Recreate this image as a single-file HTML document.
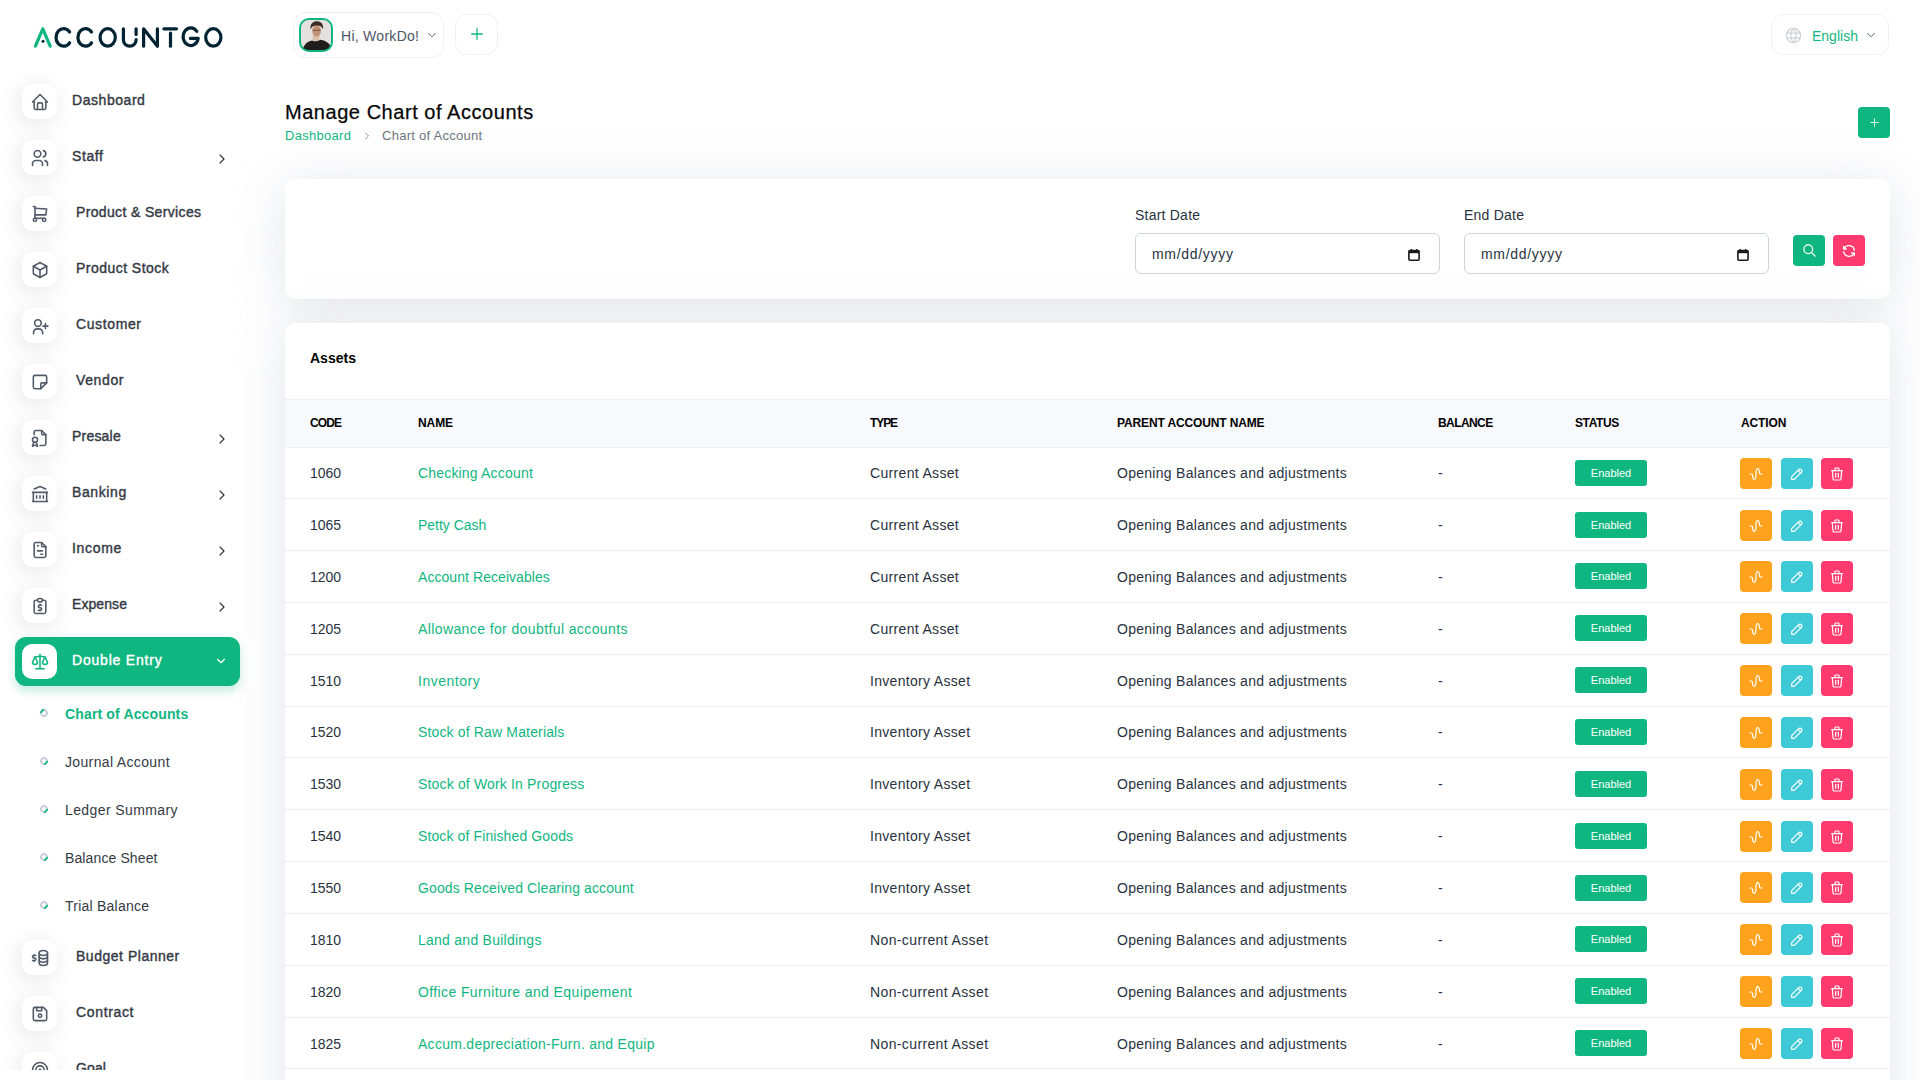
<!DOCTYPE html><html><head><meta charset="utf-8"><title>Manage Chart of Accounts</title><style>
*{box-sizing:border-box;margin:0;padding:0}
html,body{width:1920px;height:1080px;overflow:hidden;background:#fff;font-family:"Liberation Sans",sans-serif;color:#293240}
.abs{position:absolute}
.card{position:absolute;background:#fff;border-radius:10px;box-shadow:0 6px 50px rgba(182,186,203,0.38)}
.micon{position:absolute;left:22px;width:35px;height:35px;border-radius:10px;background:#fff;box-shadow:-3px 4px 23px rgba(0,0,0,0.1);display:flex;align-items:center;justify-content:center}
.mtext{position:absolute;font-size:14px;font-weight:normal;-webkit-text-stroke:0.4px currentColor;color:#343a45;white-space:nowrap;line-height:16px}
.chev{position:absolute;left:215px}
.sub{position:absolute;left:65px;font-size:14px;color:#343a45;white-space:nowrap;line-height:16px}
.dot{position:absolute;left:40px;width:8px;height:8px;border-radius:50%;border:2px solid #c9cfd8;border-bottom-color:#10b67f;transform:rotate(-45deg)}
.th{position:absolute;top:416px;letter-spacing:-0.4px;font-size:12px;font-weight:bold;color:#000;line-height:14px;white-space:nowrap}
.td{position:absolute;font-size:14px;line-height:16px;white-space:nowrap;color:#293240}
.name{color:#10b67f}
.badge{position:absolute;left:1575px;width:72px;height:26px;border-radius:3px;background:#10b67f;color:#fff;font-size:11px;display:flex;align-items:center;justify-content:center}
.act{position:absolute;width:32px;height:31px;border-radius:4px;display:flex;align-items:center;justify-content:center}
.rowline{position:absolute;left:285px;width:1605px;height:1px;background:#efeff1}
</style></head><body>
<div class="card" style="left:285px;top:179px;width:1605px;height:120px"></div>
<div class="card" style="left:285px;top:323px;width:1605px;height:900px"></div>
<svg class="abs" style="left:0;top:0" width="240" height="70" viewBox="0 0 240 70" fill="none" stroke-width="3.2" stroke-linecap="round" stroke-linejoin="round">
<path d="M35.4 46.2 L42.8 28.8 L50.2 46.2" stroke="#10b67f"/>
<circle cx="43" cy="41.2" r="1.5" fill="#002333" stroke="none"/>
<path d="M69.6 32 A7.6 8.8 0 1 0 69.6 42.8" stroke="#002333"/>
<path d="M91.5 32 A7.6 8.8 0 1 0 91.5 42.8" stroke="#002333"/>
<ellipse cx="107.7" cy="37.4" rx="7.6" ry="8.8" stroke="#002333"/>
<path d="M123.4 28.8 V40 A6.35 6.2 0 0 0 136.1 40 V39.5" stroke="#002333"/>
<path d="M136.1 28.8 V34.5" stroke="#002333"/>
<path d="M143.6 46.2 V28.8 L157.4 46.2 V28.8" stroke="#002333"/>
<path d="M163.9 28.8 H176.5" stroke="#002333"/>
<path d="M170.5 33 V46.2" stroke="#002333"/>
<path d="M196.8 31.4 A7.6 8.8 0 1 0 198.2 38.4 H190.4" stroke="#002333"/>
<ellipse cx="213.3" cy="37.4" rx="7.6" ry="8.8" stroke="#002333"/>
</svg>
<div class="abs" style="left:0;top:60px;width:260px;height:1010px;overflow:hidden">
<div class="micon" style="top:24px"><svg width="20" height="20" viewBox="0 0 24 24" fill="none" stroke="#525b69" stroke-width="1.9" stroke-linecap="round" stroke-linejoin="round" ><path d="M5 12l-2 0l9 -9l9 9l-2 0"/><path d="M5 12v7a2 2 0 0 0 2 2h10a2 2 0 0 0 2 -2v-7"/><path d="M9 21v-6a2 2 0 0 1 2 -2h2a2 2 0 0 1 2 2v6"/></svg></div>
<div class="mtext" style="left:72px;top:32px;letter-spacing:0.55px">Dashboard</div>
<div class="micon" style="top:80px"><svg width="20" height="20" viewBox="0 0 24 24" fill="none" stroke="#525b69" stroke-width="1.9" stroke-linecap="round" stroke-linejoin="round" ><path d="M5 7a4 4 0 1 0 8 0a4 4 0 1 0 -8 0"/><path d="M3 21v-2a4 4 0 0 1 4 -4h4a4 4 0 0 1 4 4v2"/><path d="M16 3.13a4 4 0 0 1 0 7.75"/><path d="M21 21v-2a4 4 0 0 0 -3 -3.85"/></svg></div>
<div class="mtext" style="left:72px;top:88px;letter-spacing:0.6px">Staff</div>
<div class="chev" style="left:214px;top:91px"><svg width="16" height="16" viewBox="0 0 24 24" fill="none" stroke="#343a45" stroke-width="1.8" stroke-linecap="round" stroke-linejoin="round" ><path d="M9 6l6 6l-6 6"/></svg></div>
<div class="micon" style="top:136px"><svg width="20" height="20" viewBox="0 0 24 24" fill="none" stroke="#525b69" stroke-width="1.9" stroke-linecap="round" stroke-linejoin="round" ><path d="M4 19a2 2 0 1 0 4 0a2 2 0 1 0 -4 0"/><path d="M15 19a2 2 0 1 0 4 0a2 2 0 1 0 -4 0"/><path d="M17 17h-11v-14h-2"/><path d="M6 5l14 1l-1 7h-13"/></svg></div>
<div class="mtext" style="left:76px;top:144px;letter-spacing:0.353px">Product &amp; Services</div>
<div class="micon" style="top:192px"><svg width="20" height="20" viewBox="0 0 24 24" fill="none" stroke="#525b69" stroke-width="1.9" stroke-linecap="round" stroke-linejoin="round" ><path d="M12 3l8 4.5l0 9l-8 4.5l-8 -4.5l0 -9l8 -4.5"/><path d="M12 12l8 -4.5"/><path d="M12 12l0 9"/><path d="M12 12l-8 -4.5"/></svg></div>
<div class="mtext" style="left:76px;top:200px;letter-spacing:0.462px">Product Stock</div>
<div class="micon" style="top:248px"><svg width="20" height="20" viewBox="0 0 24 24" fill="none" stroke="#525b69" stroke-width="1.9" stroke-linecap="round" stroke-linejoin="round" ><path d="M5.5 8.4a4 4 0 1 0 8 0a4 4 0 1 0 -8 0"/><path d="M4.2 21.4v-1.5a4.5 4.5 0 0 1 4.5 -4.5h2a4.5 4.5 0 0 1 4.5 4.5v1.5"/><path d="M15.5 12.1h6m-3 -3v6"/></svg></div>
<div class="mtext" style="left:76px;top:256px;letter-spacing:0.614px">Customer</div>
<div class="micon" style="top:304px"><svg width="20" height="20" viewBox="0 0 24 24" fill="none" stroke="#525b69" stroke-width="1.9" stroke-linecap="round" stroke-linejoin="round" ><path d="M13 20l7 -7"/><path d="M13 20v-6a1 1 0 0 1 1 -1h6v-7a2 2 0 0 0 -2 -2h-12a2 2 0 0 0 -2 2v12a2 2 0 0 0 2 2h7"/></svg></div>
<div class="mtext" style="left:76px;top:312px;letter-spacing:0.62px">Vendor</div>
<div class="micon" style="top:360px"><svg width="20" height="20" viewBox="0 0 24 24" fill="none" stroke="#525b69" stroke-width="1.9" stroke-linecap="round" stroke-linejoin="round" ><path d="M14 3v4a1 1 0 0 0 1 1h4"/><path d="M5 8v-3a2 2 0 0 1 2 -2h7l5 5v11a2 2 0 0 1 -2 2h-5"/><path d="M3 14a3 3 0 1 0 6 0a3 3 0 1 0 -6 0"/><path d="M4.5 17l-1.5 5l3 -1.5l3 1.5l-1.5 -5"/></svg></div>
<div class="mtext" style="left:72px;top:368px;letter-spacing:0.208px">Presale</div>
<div class="chev" style="left:214px;top:371px"><svg width="16" height="16" viewBox="0 0 24 24" fill="none" stroke="#343a45" stroke-width="1.8" stroke-linecap="round" stroke-linejoin="round" ><path d="M9 6l6 6l-6 6"/></svg></div>
<div class="micon" style="top:416px"><svg width="20" height="20" viewBox="0 0 24 24" fill="none" stroke="#525b69" stroke-width="1.9" stroke-linecap="round" stroke-linejoin="round" ><path d="M3 21l18 0"/><path d="M3 10l18 0"/><path d="M5 6l7 -3l7 3"/><path d="M4 10l0 11"/><path d="M20 10l0 11"/><path d="M8 14l0 3"/><path d="M12 14l0 3"/><path d="M16 14l0 3"/></svg></div>
<div class="mtext" style="left:72px;top:424px;letter-spacing:0.608px">Banking</div>
<div class="chev" style="left:214px;top:427px"><svg width="16" height="16" viewBox="0 0 24 24" fill="none" stroke="#343a45" stroke-width="1.8" stroke-linecap="round" stroke-linejoin="round" ><path d="M9 6l6 6l-6 6"/></svg></div>
<div class="micon" style="top:472px"><svg width="20" height="20" viewBox="0 0 24 24" fill="none" stroke="#525b69" stroke-width="1.9" stroke-linecap="round" stroke-linejoin="round" ><path d="M14 3v4a1 1 0 0 0 1 1h4"/><path d="M17 21h-10a2 2 0 0 1 -2 -2v-14a2 2 0 0 1 2 -2h7l5 5v11a2 2 0 0 1 -2 2z"/><path d="M9 7l1 0"/><path d="M9 13l6 0"/><path d="M13 17l2 0"/></svg></div>
<div class="mtext" style="left:72px;top:480px;letter-spacing:0.67px">Income</div>
<div class="chev" style="left:214px;top:483px"><svg width="16" height="16" viewBox="0 0 24 24" fill="none" stroke="#343a45" stroke-width="1.8" stroke-linecap="round" stroke-linejoin="round" ><path d="M9 6l6 6l-6 6"/></svg></div>
<div class="micon" style="top:528px"><svg width="20" height="20" viewBox="0 0 24 24" fill="none" stroke="#525b69" stroke-width="1.9" stroke-linecap="round" stroke-linejoin="round" ><path d="M9 5h-2a2 2 0 0 0 -2 2v12a2 2 0 0 0 2 2h10a2 2 0 0 0 2 -2v-12a2 2 0 0 0 -2 -2h-2"/><path d="M9 5a2 2 0 0 1 2 -2h2a2 2 0 0 1 2 2a2 2 0 0 1 -2 2h-2a2 2 0 0 1 -2 -2z"/><path d="M14 11h-2.5a1.5 1.5 0 0 0 0 3h1a1.5 1.5 0 0 1 0 3h-2.5"/><path d="M12 17v1m0 -8v1"/></svg></div>
<div class="mtext" style="left:72px;top:536px;letter-spacing:0.083px">Expense</div>
<div class="chev" style="left:214px;top:539px"><svg width="16" height="16" viewBox="0 0 24 24" fill="none" stroke="#343a45" stroke-width="1.8" stroke-linecap="round" stroke-linejoin="round" ><path d="M9 6l6 6l-6 6"/></svg></div>
<div class="abs" style="left:15px;top:577px;width:225px;height:49px;border-radius:11px;background:#10b67f;box-shadow:0 5px 10px rgba(16,182,127,0.25)"></div>
<div class="micon" style="top:584px;box-shadow:none"><svg width="20" height="20" viewBox="0 0 24 24" fill="none" stroke="#10b67f" stroke-width="1.9" stroke-linecap="round" stroke-linejoin="round" ><path d="M7 20l10 0"/><path d="M6 6l6 -1l6 1"/><path d="M12 3l0 17"/><path d="M9 12l-3 -6l-3 6a3 3 0 0 0 6 0"/><path d="M21 12l-3 -6l-3 6a3 3 0 0 0 6 0"/></svg></div>
<div class="mtext" style="left:72px;top:592px;color:#fff;letter-spacing:0.791px">Double Entry</div>
<div class="chev" style="left:214px;top:594px"><svg width="14" height="14" viewBox="0 0 24 24" fill="none" stroke="#fff" stroke-width="2" stroke-linecap="round" stroke-linejoin="round" ><path d="M6 9l6 6l6 -6"/></svg></div>
<div class="dot" style="top:649px;border-bottom-color:#c9cfd8;border-top-color:#10b67f"></div>
<div class="sub" style="top:646px;color:#10b67f;font-weight:bold;letter-spacing:0.15px">Chart of Accounts</div>
<div class="dot" style="top:697px;"></div>
<div class="sub" style="top:694px;;letter-spacing:0.35px">Journal Account</div>
<div class="dot" style="top:745px;"></div>
<div class="sub" style="top:742px;;letter-spacing:0.392px">Ledger Summary</div>
<div class="dot" style="top:793px;"></div>
<div class="sub" style="top:790px;;letter-spacing:0.117px">Balance Sheet</div>
<div class="dot" style="top:841px;"></div>
<div class="sub" style="top:838px;;letter-spacing:0.233px">Trial Balance</div>
<div class="micon" style="top:880px"><svg width="20" height="20" viewBox="0 0 24 24" fill="none" stroke="#525b69" stroke-width="1.9" stroke-linecap="round" stroke-linejoin="round" ><path d="M11 6a5 3 0 1 0 10 0a5 3 0 1 0 -10 0"/><path d="M11 6v4c0 1.657 2.239 3 5 3s5 -1.343 5 -3v-4"/><path d="M11 10v4c0 1.657 2.239 3 5 3s5 -1.343 5 -3v-4"/><path d="M11 14v4c0 1.657 2.239 3 5 3s5 -1.343 5 -3v-4"/><path d="M7 9h-2.5a1.5 1.5 0 0 0 0 3h1a1.5 1.5 0 0 1 0 3h-2.5"/><path d="M5 15v1m0 -8v1"/></svg></div>
<div class="mtext" style="left:76px;top:888px;letter-spacing:0.519px">Budget Planner</div>
<div class="micon" style="top:936px"><svg width="20" height="20" viewBox="0 0 24 24" fill="none" stroke="#525b69" stroke-width="1.9" stroke-linecap="round" stroke-linejoin="round" ><path d="M6 4h10l4 4v10a2 2 0 0 1 -2 2h-12a2 2 0 0 1 -2 -2v-12a2 2 0 0 1 2 -2"/><path d="M10 14a2 2 0 1 0 4 0a2 2 0 1 0 -4 0"/><path d="M14 4l0 4l-6 0l0 -4"/></svg></div>
<div class="mtext" style="left:76px;top:944px;letter-spacing:0.657px">Contract</div>
<div class="micon" style="top:992px"><svg width="20" height="20" viewBox="0 0 24 24" fill="none" stroke="#525b69" stroke-width="1.9" stroke-linecap="round" stroke-linejoin="round" ><path d="M11 12a1 1 0 1 0 2 0a1 1 0 1 0 -2 0"/><path d="M7 12a5 5 0 1 0 10 0a5 5 0 1 0 -10 0"/><path d="M3 12a9 9 0 1 0 18 0a9 9 0 1 0 -18 0"/></svg></div>
<div class="mtext" style="left:76px;top:1000px;letter-spacing:0.133px">Goal</div>
</div>
<div class="abs" style="left:293px;top:12px;width:151px;height:46px;border:1px solid #f1f1f3;border-radius:12px;background:#fff"></div>
<svg class="abs" style="left:299px;top:18px" width="34" height="34" viewBox="0 0 34 34">
<defs><clipPath id="av"><rect x="1.5" y="1.5" width="31" height="31" rx="8"/></clipPath></defs>
<rect x="1" y="1" width="32" height="32" rx="9" fill="#e5e1df"/>
<g clip-path="url(#av)">
<path d="M13.5 17 L20.5 17 L20.5 23 L13.5 23 Z" fill="#dcc3b0"/>
<path d="M3.5 34 C4 27 8 23.5 13 22.5 Q17 24.5 21.5 21.8 C27 22.5 31.5 26 33 31 L33 34 Z" fill="#1f1e1d"/>
<ellipse cx="17.6" cy="12.8" rx="4.4" ry="5.9" fill="#c39277"/>
<path d="M11.6 11.5 C10.8 5.5 14.5 3.2 18 3.3 C22 3.5 24.8 6 24 11.5 C23.2 8.6 21.5 7.4 17.8 7.4 C14.2 7.4 12.6 8.8 11.6 11.5 Z" fill="#3b2e26"/>
<path d="M13.8 12.2 H21.4" stroke="#5a4032" stroke-width="0.8"/>
</g>
<rect x="1" y="1" width="32" height="32" rx="9" fill="none" stroke="#10b67f" stroke-width="2"/>
</svg>
<div class="abs" style="left:341px;top:28px;font-size:14px;line-height:16px;color:#4d5665;letter-spacing:0.28px">Hi, WorkDo!</div>
<div class="abs" style="left:425px;top:28px"><svg width="14" height="14" viewBox="0 0 24 24" fill="none" stroke="#525b69" stroke-width="1.6" stroke-linecap="round" stroke-linejoin="round" ><path d="M6 9l6 6l6 -6"/></svg></div>
<div class="abs" style="left:455px;top:14px;width:43px;height:41px;border:1px solid #f1f1f3;border-radius:12px;background:#fff;display:flex;align-items:center;justify-content:center"><span style="display:block;margin-top:2px"><svg width="18" height="18" viewBox="0 0 24 24" fill="none" stroke="#10b67f" stroke-width="1.7" stroke-linecap="round" stroke-linejoin="round" ><path d="M12 5l0 14"/><path d="M5 12l14 0"/></svg></span></div>
<div class="abs" style="left:1771px;top:14px;width:118px;height:41px;border:1px solid #f1f1f3;border-radius:12px;background:#fff"></div>
<div class="abs" style="left:1784px;top:26px"><svg width="19" height="19" viewBox="0 0 24 24" fill="none" stroke="#cfd2d7" stroke-width="1.6" stroke-linecap="round" stroke-linejoin="round" ><path d="M3 12a9 9 0 1 0 18 0a9 9 0 0 0 -18 0"/><path d="M3.6 9h16.8"/><path d="M3.6 15h16.8"/><path d="M11.5 3a17 17 0 0 0 0 18"/><path d="M12.5 3a17 17 0 0 1 0 18"/></svg></div>
<div class="abs" style="left:1812px;top:28px;font-size:14px;line-height:16px;color:#10b67f">English</div>
<div class="abs" style="left:1864px;top:28px"><svg width="14" height="14" viewBox="0 0 24 24" fill="none" stroke="#525b69" stroke-width="1.6" stroke-linecap="round" stroke-linejoin="round" ><path d="M6 9l6 6l6 -6"/></svg></div>
<div class="abs" style="left:285px;top:101px;font-size:20px;-webkit-text-stroke:0.25px #060606;line-height:23px;color:#060606;letter-spacing:0.543px">Manage Chart of Accounts</div>
<div class="abs" style="left:285px;top:128px;font-size:13px;line-height:15px;color:#10b67f;letter-spacing:0.287px">Dashboard</div>
<div class="abs" style="left:361px;top:128px"><svg width="12" height="12" viewBox="0 0 24 24" fill="none" stroke="#6c757d" stroke-width="1.6" stroke-linecap="round" stroke-linejoin="round" ><path d="M9 6l6 6l-6 6"/></svg></div>
<div class="abs" style="left:382px;top:128px;font-size:13px;line-height:15px;color:#6c757d;letter-spacing:0.273px">Chart of Account</div>
<div class="abs" style="left:1858px;top:107px;width:32px;height:31px;border-radius:4px;background:#10b67f;display:flex;align-items:center;justify-content:center"><svg width="13" height="13" viewBox="0 0 24 24" fill="none" stroke="#fff" stroke-width="1.6" stroke-linecap="round" stroke-linejoin="round" ><path d="M12 5l0 14"/><path d="M5 12l14 0"/></svg></div>
<div class="abs" style="left:1135px;top:207px;font-size:14px;line-height:16px;color:#293240;letter-spacing:0.222px">Start Date</div>
<div class="abs" style="left:1135px;top:233px;width:305px;height:41px;border:1px solid #ced4da;border-radius:6px;background:#fff"></div>
<div class="abs" style="left:1152px;top:246px;font-size:14px;line-height:16px;color:#293240;letter-spacing:0.689px">mm/dd/yyyy</div>
<div class="abs" style="left:1408px;top:247px"><svg width="12" height="12" viewBox="0 0 12 12"><rect x="0.9" y="1.6" width="10.2" height="9.6" rx="1" fill="none" stroke="#1a1a1a" stroke-width="1.6"/><rect x="0.9" y="1.6" width="10.2" height="2.6" fill="#1a1a1a"/><rect x="2.6" y="0" width="1.4" height="2.4" fill="#1a1a1a"/><rect x="8" y="0" width="1.4" height="2.4" fill="#1a1a1a"/></svg></div>
<div class="abs" style="left:1464px;top:207px;font-size:14px;line-height:16px;color:#293240;letter-spacing:0.222px">End Date</div>
<div class="abs" style="left:1464px;top:233px;width:305px;height:41px;border:1px solid #ced4da;border-radius:6px;background:#fff"></div>
<div class="abs" style="left:1481px;top:246px;font-size:14px;line-height:16px;color:#293240;letter-spacing:0.689px">mm/dd/yyyy</div>
<div class="abs" style="left:1737px;top:247px"><svg width="12" height="12" viewBox="0 0 12 12"><rect x="0.9" y="1.6" width="10.2" height="9.6" rx="1" fill="none" stroke="#1a1a1a" stroke-width="1.6"/><rect x="0.9" y="1.6" width="10.2" height="2.6" fill="#1a1a1a"/><rect x="2.6" y="0" width="1.4" height="2.4" fill="#1a1a1a"/><rect x="8" y="0" width="1.4" height="2.4" fill="#1a1a1a"/></svg></div>
<div class="act" style="left:1793px;top:235px;background:#10b67f"><svg width="15" height="15" viewBox="0 0 24 24" fill="none" stroke="#fff" stroke-width="2" stroke-linecap="round" stroke-linejoin="round" ><path d="M3 10a7 7 0 1 0 14 0a7 7 0 1 0 -14 0"/><path d="M21 21l-6 -6"/></svg></div>
<div class="act" style="left:1833px;top:235px;background:#ff3a6e"><svg width="16" height="16" viewBox="0 0 24 24" fill="none" stroke="#fff" stroke-width="1.9" stroke-linecap="round" stroke-linejoin="round" ><path d="M20 11a8.1 8.1 0 0 0 -15.5 -2m-.5 -4v4h4"/><path d="M4 13a8.1 8.1 0 0 0 15.5 2m.5 4v-4h-4"/></svg></div>
<div class="abs" style="left:310px;top:350px;font-size:14px;line-height:16px;font-weight:bold;color:#000">Assets</div>
<div class="abs" style="left:285px;top:399px;width:1605px;height:49px;background:#f8f9fc;border-top:1px solid #efeff1;border-bottom:1px solid #efeff1"></div>
<div class="th" style="left:310px;letter-spacing:-0.91px">CODE</div>
<div class="th" style="left:418px;letter-spacing:-0.071px">NAME</div>
<div class="th" style="left:870px;letter-spacing:-1.09px">TYPE</div>
<div class="th" style="left:1117px;letter-spacing:-0.133px">PARENT ACCOUNT NAME</div>
<div class="th" style="left:1438px;letter-spacing:-0.588px">BALANCE</div>
<div class="th" style="left:1575px;letter-spacing:-0.4px">STATUS</div>
<div class="th" style="left:1741px;letter-spacing:-0.106px">ACTION</div>
<div class="rowline" style="top:498px"></div>
<div class="td" style="left:310px;top:465px">1060</div>
<div class="td name" style="left:418px;top:465px;letter-spacing:0.18px">Checking Account</div>
<div class="td" style="left:870px;top:465px;letter-spacing:0.329px">Current Asset</div>
<div class="td" style="left:1117px;top:465px;letter-spacing:0.281px">Opening Balances and adjustments</div>
<div class="td" style="left:1438px;top:465px">-</div>
<div class="badge" style="top:460px">Enabled</div>
<div class="act" style="left:1740px;top:458px;background:#ffa21d"><svg width="16" height="16" viewBox="0 0 24 24" fill="none" stroke="#fff" stroke-width="1.8" stroke-linecap="round" stroke-linejoin="round" ><path d="M21 12h-2c-.894 0 -1.662 -.857 -1.761 -2c-.296 -3.45 -.749 -6 -2.749 -6s-2.5 3.582 -2.5 8s-.5 8 -2.5 8s-2.452 -2.547 -2.749 -6c-.1 -1.147 -.867 -2 -1.763 -2h-2"/></svg></div>
<div class="act" style="left:1781px;top:458px;background:#3ec9d6"><svg width="16" height="16" viewBox="0 0 24 24" fill="none" stroke="#fff" stroke-width="1.8" stroke-linecap="round" stroke-linejoin="round" ><path d="M4 20h4l10.5 -10.5a2.828 2.828 0 1 0 -4 -4l-10.5 10.5v4"/><path d="M13.5 6.5l4 4"/></svg></div>
<div class="act" style="left:1821px;top:458px;background:#ff3a6e"><svg width="16" height="16" viewBox="0 0 24 24" fill="none" stroke="#fff" stroke-width="1.8" stroke-linecap="round" stroke-linejoin="round" ><path d="M4 7l16 0"/><path d="M10 11l0 6"/><path d="M14 11l0 6"/><path d="M5 7l1 12a2 2 0 0 0 2 2h8a2 2 0 0 0 2 -2l1 -12"/><path d="M9 7v-3a1 1 0 0 1 1 -1h4a1 1 0 0 1 1 1v3"/></svg></div>
<div class="rowline" style="top:550px"></div>
<div class="td" style="left:310px;top:517px">1065</div>
<div class="td name" style="left:418px;top:517px;letter-spacing:-0.022px">Petty Cash</div>
<div class="td" style="left:870px;top:517px;letter-spacing:0.329px">Current Asset</div>
<div class="td" style="left:1117px;top:517px;letter-spacing:0.281px">Opening Balances and adjustments</div>
<div class="td" style="left:1438px;top:517px">-</div>
<div class="badge" style="top:512px">Enabled</div>
<div class="act" style="left:1740px;top:510px;background:#ffa21d"><svg width="16" height="16" viewBox="0 0 24 24" fill="none" stroke="#fff" stroke-width="1.8" stroke-linecap="round" stroke-linejoin="round" ><path d="M21 12h-2c-.894 0 -1.662 -.857 -1.761 -2c-.296 -3.45 -.749 -6 -2.749 -6s-2.5 3.582 -2.5 8s-.5 8 -2.5 8s-2.452 -2.547 -2.749 -6c-.1 -1.147 -.867 -2 -1.763 -2h-2"/></svg></div>
<div class="act" style="left:1781px;top:510px;background:#3ec9d6"><svg width="16" height="16" viewBox="0 0 24 24" fill="none" stroke="#fff" stroke-width="1.8" stroke-linecap="round" stroke-linejoin="round" ><path d="M4 20h4l10.5 -10.5a2.828 2.828 0 1 0 -4 -4l-10.5 10.5v4"/><path d="M13.5 6.5l4 4"/></svg></div>
<div class="act" style="left:1821px;top:510px;background:#ff3a6e"><svg width="16" height="16" viewBox="0 0 24 24" fill="none" stroke="#fff" stroke-width="1.8" stroke-linecap="round" stroke-linejoin="round" ><path d="M4 7l16 0"/><path d="M10 11l0 6"/><path d="M14 11l0 6"/><path d="M5 7l1 12a2 2 0 0 0 2 2h8a2 2 0 0 0 2 -2l1 -12"/><path d="M9 7v-3a1 1 0 0 1 1 -1h4a1 1 0 0 1 1 1v3"/></svg></div>
<div class="rowline" style="top:602px"></div>
<div class="td" style="left:310px;top:569px">1200</div>
<div class="td name" style="left:418px;top:569px;letter-spacing:0.061px">Account Receivables</div>
<div class="td" style="left:870px;top:569px;letter-spacing:0.329px">Current Asset</div>
<div class="td" style="left:1117px;top:569px;letter-spacing:0.281px">Opening Balances and adjustments</div>
<div class="td" style="left:1438px;top:569px">-</div>
<div class="badge" style="top:563px">Enabled</div>
<div class="act" style="left:1740px;top:561px;background:#ffa21d"><svg width="16" height="16" viewBox="0 0 24 24" fill="none" stroke="#fff" stroke-width="1.8" stroke-linecap="round" stroke-linejoin="round" ><path d="M21 12h-2c-.894 0 -1.662 -.857 -1.761 -2c-.296 -3.45 -.749 -6 -2.749 -6s-2.5 3.582 -2.5 8s-.5 8 -2.5 8s-2.452 -2.547 -2.749 -6c-.1 -1.147 -.867 -2 -1.763 -2h-2"/></svg></div>
<div class="act" style="left:1781px;top:561px;background:#3ec9d6"><svg width="16" height="16" viewBox="0 0 24 24" fill="none" stroke="#fff" stroke-width="1.8" stroke-linecap="round" stroke-linejoin="round" ><path d="M4 20h4l10.5 -10.5a2.828 2.828 0 1 0 -4 -4l-10.5 10.5v4"/><path d="M13.5 6.5l4 4"/></svg></div>
<div class="act" style="left:1821px;top:561px;background:#ff3a6e"><svg width="16" height="16" viewBox="0 0 24 24" fill="none" stroke="#fff" stroke-width="1.8" stroke-linecap="round" stroke-linejoin="round" ><path d="M4 7l16 0"/><path d="M10 11l0 6"/><path d="M14 11l0 6"/><path d="M5 7l1 12a2 2 0 0 0 2 2h8a2 2 0 0 0 2 -2l1 -12"/><path d="M9 7v-3a1 1 0 0 1 1 -1h4a1 1 0 0 1 1 1v3"/></svg></div>
<div class="rowline" style="top:654px"></div>
<div class="td" style="left:310px;top:621px">1205</div>
<div class="td name" style="left:418px;top:621px;letter-spacing:0.393px">Allowance for doubtful accounts</div>
<div class="td" style="left:870px;top:621px;letter-spacing:0.329px">Current Asset</div>
<div class="td" style="left:1117px;top:621px;letter-spacing:0.281px">Opening Balances and adjustments</div>
<div class="td" style="left:1438px;top:621px">-</div>
<div class="badge" style="top:615px">Enabled</div>
<div class="act" style="left:1740px;top:613px;background:#ffa21d"><svg width="16" height="16" viewBox="0 0 24 24" fill="none" stroke="#fff" stroke-width="1.8" stroke-linecap="round" stroke-linejoin="round" ><path d="M21 12h-2c-.894 0 -1.662 -.857 -1.761 -2c-.296 -3.45 -.749 -6 -2.749 -6s-2.5 3.582 -2.5 8s-.5 8 -2.5 8s-2.452 -2.547 -2.749 -6c-.1 -1.147 -.867 -2 -1.763 -2h-2"/></svg></div>
<div class="act" style="left:1781px;top:613px;background:#3ec9d6"><svg width="16" height="16" viewBox="0 0 24 24" fill="none" stroke="#fff" stroke-width="1.8" stroke-linecap="round" stroke-linejoin="round" ><path d="M4 20h4l10.5 -10.5a2.828 2.828 0 1 0 -4 -4l-10.5 10.5v4"/><path d="M13.5 6.5l4 4"/></svg></div>
<div class="act" style="left:1821px;top:613px;background:#ff3a6e"><svg width="16" height="16" viewBox="0 0 24 24" fill="none" stroke="#fff" stroke-width="1.8" stroke-linecap="round" stroke-linejoin="round" ><path d="M4 7l16 0"/><path d="M10 11l0 6"/><path d="M14 11l0 6"/><path d="M5 7l1 12a2 2 0 0 0 2 2h8a2 2 0 0 0 2 -2l1 -12"/><path d="M9 7v-3a1 1 0 0 1 1 -1h4a1 1 0 0 1 1 1v3"/></svg></div>
<div class="rowline" style="top:706px"></div>
<div class="td" style="left:310px;top:673px">1510</div>
<div class="td name" style="left:418px;top:673px;letter-spacing:0.512px">Inventory</div>
<div class="td" style="left:870px;top:673px;letter-spacing:0.307px">Inventory Asset</div>
<div class="td" style="left:1117px;top:673px;letter-spacing:0.281px">Opening Balances and adjustments</div>
<div class="td" style="left:1438px;top:673px">-</div>
<div class="badge" style="top:667px">Enabled</div>
<div class="act" style="left:1740px;top:665px;background:#ffa21d"><svg width="16" height="16" viewBox="0 0 24 24" fill="none" stroke="#fff" stroke-width="1.8" stroke-linecap="round" stroke-linejoin="round" ><path d="M21 12h-2c-.894 0 -1.662 -.857 -1.761 -2c-.296 -3.45 -.749 -6 -2.749 -6s-2.5 3.582 -2.5 8s-.5 8 -2.5 8s-2.452 -2.547 -2.749 -6c-.1 -1.147 -.867 -2 -1.763 -2h-2"/></svg></div>
<div class="act" style="left:1781px;top:665px;background:#3ec9d6"><svg width="16" height="16" viewBox="0 0 24 24" fill="none" stroke="#fff" stroke-width="1.8" stroke-linecap="round" stroke-linejoin="round" ><path d="M4 20h4l10.5 -10.5a2.828 2.828 0 1 0 -4 -4l-10.5 10.5v4"/><path d="M13.5 6.5l4 4"/></svg></div>
<div class="act" style="left:1821px;top:665px;background:#ff3a6e"><svg width="16" height="16" viewBox="0 0 24 24" fill="none" stroke="#fff" stroke-width="1.8" stroke-linecap="round" stroke-linejoin="round" ><path d="M4 7l16 0"/><path d="M10 11l0 6"/><path d="M14 11l0 6"/><path d="M5 7l1 12a2 2 0 0 0 2 2h8a2 2 0 0 0 2 -2l1 -12"/><path d="M9 7v-3a1 1 0 0 1 1 -1h4a1 1 0 0 1 1 1v3"/></svg></div>
<div class="rowline" style="top:757px"></div>
<div class="td" style="left:310px;top:724px">1520</div>
<div class="td name" style="left:418px;top:724px;letter-spacing:0.152px">Stock of Raw Materials</div>
<div class="td" style="left:870px;top:724px;letter-spacing:0.307px">Inventory Asset</div>
<div class="td" style="left:1117px;top:724px;letter-spacing:0.281px">Opening Balances and adjustments</div>
<div class="td" style="left:1438px;top:724px">-</div>
<div class="badge" style="top:719px">Enabled</div>
<div class="act" style="left:1740px;top:717px;background:#ffa21d"><svg width="16" height="16" viewBox="0 0 24 24" fill="none" stroke="#fff" stroke-width="1.8" stroke-linecap="round" stroke-linejoin="round" ><path d="M21 12h-2c-.894 0 -1.662 -.857 -1.761 -2c-.296 -3.45 -.749 -6 -2.749 -6s-2.5 3.582 -2.5 8s-.5 8 -2.5 8s-2.452 -2.547 -2.749 -6c-.1 -1.147 -.867 -2 -1.763 -2h-2"/></svg></div>
<div class="act" style="left:1781px;top:717px;background:#3ec9d6"><svg width="16" height="16" viewBox="0 0 24 24" fill="none" stroke="#fff" stroke-width="1.8" stroke-linecap="round" stroke-linejoin="round" ><path d="M4 20h4l10.5 -10.5a2.828 2.828 0 1 0 -4 -4l-10.5 10.5v4"/><path d="M13.5 6.5l4 4"/></svg></div>
<div class="act" style="left:1821px;top:717px;background:#ff3a6e"><svg width="16" height="16" viewBox="0 0 24 24" fill="none" stroke="#fff" stroke-width="1.8" stroke-linecap="round" stroke-linejoin="round" ><path d="M4 7l16 0"/><path d="M10 11l0 6"/><path d="M14 11l0 6"/><path d="M5 7l1 12a2 2 0 0 0 2 2h8a2 2 0 0 0 2 -2l1 -12"/><path d="M9 7v-3a1 1 0 0 1 1 -1h4a1 1 0 0 1 1 1v3"/></svg></div>
<div class="rowline" style="top:809px"></div>
<div class="td" style="left:310px;top:776px">1530</div>
<div class="td name" style="left:418px;top:776px;letter-spacing:0.163px">Stock of Work In Progress</div>
<div class="td" style="left:870px;top:776px;letter-spacing:0.307px">Inventory Asset</div>
<div class="td" style="left:1117px;top:776px;letter-spacing:0.281px">Opening Balances and adjustments</div>
<div class="td" style="left:1438px;top:776px">-</div>
<div class="badge" style="top:771px">Enabled</div>
<div class="act" style="left:1740px;top:769px;background:#ffa21d"><svg width="16" height="16" viewBox="0 0 24 24" fill="none" stroke="#fff" stroke-width="1.8" stroke-linecap="round" stroke-linejoin="round" ><path d="M21 12h-2c-.894 0 -1.662 -.857 -1.761 -2c-.296 -3.45 -.749 -6 -2.749 -6s-2.5 3.582 -2.5 8s-.5 8 -2.5 8s-2.452 -2.547 -2.749 -6c-.1 -1.147 -.867 -2 -1.763 -2h-2"/></svg></div>
<div class="act" style="left:1781px;top:769px;background:#3ec9d6"><svg width="16" height="16" viewBox="0 0 24 24" fill="none" stroke="#fff" stroke-width="1.8" stroke-linecap="round" stroke-linejoin="round" ><path d="M4 20h4l10.5 -10.5a2.828 2.828 0 1 0 -4 -4l-10.5 10.5v4"/><path d="M13.5 6.5l4 4"/></svg></div>
<div class="act" style="left:1821px;top:769px;background:#ff3a6e"><svg width="16" height="16" viewBox="0 0 24 24" fill="none" stroke="#fff" stroke-width="1.8" stroke-linecap="round" stroke-linejoin="round" ><path d="M4 7l16 0"/><path d="M10 11l0 6"/><path d="M14 11l0 6"/><path d="M5 7l1 12a2 2 0 0 0 2 2h8a2 2 0 0 0 2 -2l1 -12"/><path d="M9 7v-3a1 1 0 0 1 1 -1h4a1 1 0 0 1 1 1v3"/></svg></div>
<div class="rowline" style="top:861px"></div>
<div class="td" style="left:310px;top:828px">1540</div>
<div class="td name" style="left:418px;top:828px;letter-spacing:0.114px">Stock of Finished Goods</div>
<div class="td" style="left:870px;top:828px;letter-spacing:0.307px">Inventory Asset</div>
<div class="td" style="left:1117px;top:828px;letter-spacing:0.281px">Opening Balances and adjustments</div>
<div class="td" style="left:1438px;top:828px">-</div>
<div class="badge" style="top:823px">Enabled</div>
<div class="act" style="left:1740px;top:821px;background:#ffa21d"><svg width="16" height="16" viewBox="0 0 24 24" fill="none" stroke="#fff" stroke-width="1.8" stroke-linecap="round" stroke-linejoin="round" ><path d="M21 12h-2c-.894 0 -1.662 -.857 -1.761 -2c-.296 -3.45 -.749 -6 -2.749 -6s-2.5 3.582 -2.5 8s-.5 8 -2.5 8s-2.452 -2.547 -2.749 -6c-.1 -1.147 -.867 -2 -1.763 -2h-2"/></svg></div>
<div class="act" style="left:1781px;top:821px;background:#3ec9d6"><svg width="16" height="16" viewBox="0 0 24 24" fill="none" stroke="#fff" stroke-width="1.8" stroke-linecap="round" stroke-linejoin="round" ><path d="M4 20h4l10.5 -10.5a2.828 2.828 0 1 0 -4 -4l-10.5 10.5v4"/><path d="M13.5 6.5l4 4"/></svg></div>
<div class="act" style="left:1821px;top:821px;background:#ff3a6e"><svg width="16" height="16" viewBox="0 0 24 24" fill="none" stroke="#fff" stroke-width="1.8" stroke-linecap="round" stroke-linejoin="round" ><path d="M4 7l16 0"/><path d="M10 11l0 6"/><path d="M14 11l0 6"/><path d="M5 7l1 12a2 2 0 0 0 2 2h8a2 2 0 0 0 2 -2l1 -12"/><path d="M9 7v-3a1 1 0 0 1 1 -1h4a1 1 0 0 1 1 1v3"/></svg></div>
<div class="rowline" style="top:913px"></div>
<div class="td" style="left:310px;top:880px">1550</div>
<div class="td name" style="left:418px;top:880px;letter-spacing:0.11px">Goods Received Clearing account</div>
<div class="td" style="left:870px;top:880px;letter-spacing:0.307px">Inventory Asset</div>
<div class="td" style="left:1117px;top:880px;letter-spacing:0.281px">Opening Balances and adjustments</div>
<div class="td" style="left:1438px;top:880px">-</div>
<div class="badge" style="top:875px">Enabled</div>
<div class="act" style="left:1740px;top:872px;background:#ffa21d"><svg width="16" height="16" viewBox="0 0 24 24" fill="none" stroke="#fff" stroke-width="1.8" stroke-linecap="round" stroke-linejoin="round" ><path d="M21 12h-2c-.894 0 -1.662 -.857 -1.761 -2c-.296 -3.45 -.749 -6 -2.749 -6s-2.5 3.582 -2.5 8s-.5 8 -2.5 8s-2.452 -2.547 -2.749 -6c-.1 -1.147 -.867 -2 -1.763 -2h-2"/></svg></div>
<div class="act" style="left:1781px;top:872px;background:#3ec9d6"><svg width="16" height="16" viewBox="0 0 24 24" fill="none" stroke="#fff" stroke-width="1.8" stroke-linecap="round" stroke-linejoin="round" ><path d="M4 20h4l10.5 -10.5a2.828 2.828 0 1 0 -4 -4l-10.5 10.5v4"/><path d="M13.5 6.5l4 4"/></svg></div>
<div class="act" style="left:1821px;top:872px;background:#ff3a6e"><svg width="16" height="16" viewBox="0 0 24 24" fill="none" stroke="#fff" stroke-width="1.8" stroke-linecap="round" stroke-linejoin="round" ><path d="M4 7l16 0"/><path d="M10 11l0 6"/><path d="M14 11l0 6"/><path d="M5 7l1 12a2 2 0 0 0 2 2h8a2 2 0 0 0 2 -2l1 -12"/><path d="M9 7v-3a1 1 0 0 1 1 -1h4a1 1 0 0 1 1 1v3"/></svg></div>
<div class="rowline" style="top:965px"></div>
<div class="td" style="left:310px;top:932px">1810</div>
<div class="td name" style="left:418px;top:932px;letter-spacing:0.253px">Land and Buildings</div>
<div class="td" style="left:870px;top:932px;letter-spacing:0.375px">Non-current Asset</div>
<div class="td" style="left:1117px;top:932px;letter-spacing:0.281px">Opening Balances and adjustments</div>
<div class="td" style="left:1438px;top:932px">-</div>
<div class="badge" style="top:926px">Enabled</div>
<div class="act" style="left:1740px;top:924px;background:#ffa21d"><svg width="16" height="16" viewBox="0 0 24 24" fill="none" stroke="#fff" stroke-width="1.8" stroke-linecap="round" stroke-linejoin="round" ><path d="M21 12h-2c-.894 0 -1.662 -.857 -1.761 -2c-.296 -3.45 -.749 -6 -2.749 -6s-2.5 3.582 -2.5 8s-.5 8 -2.5 8s-2.452 -2.547 -2.749 -6c-.1 -1.147 -.867 -2 -1.763 -2h-2"/></svg></div>
<div class="act" style="left:1781px;top:924px;background:#3ec9d6"><svg width="16" height="16" viewBox="0 0 24 24" fill="none" stroke="#fff" stroke-width="1.8" stroke-linecap="round" stroke-linejoin="round" ><path d="M4 20h4l10.5 -10.5a2.828 2.828 0 1 0 -4 -4l-10.5 10.5v4"/><path d="M13.5 6.5l4 4"/></svg></div>
<div class="act" style="left:1821px;top:924px;background:#ff3a6e"><svg width="16" height="16" viewBox="0 0 24 24" fill="none" stroke="#fff" stroke-width="1.8" stroke-linecap="round" stroke-linejoin="round" ><path d="M4 7l16 0"/><path d="M10 11l0 6"/><path d="M14 11l0 6"/><path d="M5 7l1 12a2 2 0 0 0 2 2h8a2 2 0 0 0 2 -2l1 -12"/><path d="M9 7v-3a1 1 0 0 1 1 -1h4a1 1 0 0 1 1 1v3"/></svg></div>
<div class="rowline" style="top:1017px"></div>
<div class="td" style="left:310px;top:984px">1820</div>
<div class="td name" style="left:418px;top:984px;letter-spacing:0.39px">Office Furniture and Equipement</div>
<div class="td" style="left:870px;top:984px;letter-spacing:0.375px">Non-current Asset</div>
<div class="td" style="left:1117px;top:984px;letter-spacing:0.281px">Opening Balances and adjustments</div>
<div class="td" style="left:1438px;top:984px">-</div>
<div class="badge" style="top:978px">Enabled</div>
<div class="act" style="left:1740px;top:976px;background:#ffa21d"><svg width="16" height="16" viewBox="0 0 24 24" fill="none" stroke="#fff" stroke-width="1.8" stroke-linecap="round" stroke-linejoin="round" ><path d="M21 12h-2c-.894 0 -1.662 -.857 -1.761 -2c-.296 -3.45 -.749 -6 -2.749 -6s-2.5 3.582 -2.5 8s-.5 8 -2.5 8s-2.452 -2.547 -2.749 -6c-.1 -1.147 -.867 -2 -1.763 -2h-2"/></svg></div>
<div class="act" style="left:1781px;top:976px;background:#3ec9d6"><svg width="16" height="16" viewBox="0 0 24 24" fill="none" stroke="#fff" stroke-width="1.8" stroke-linecap="round" stroke-linejoin="round" ><path d="M4 20h4l10.5 -10.5a2.828 2.828 0 1 0 -4 -4l-10.5 10.5v4"/><path d="M13.5 6.5l4 4"/></svg></div>
<div class="act" style="left:1821px;top:976px;background:#ff3a6e"><svg width="16" height="16" viewBox="0 0 24 24" fill="none" stroke="#fff" stroke-width="1.8" stroke-linecap="round" stroke-linejoin="round" ><path d="M4 7l16 0"/><path d="M10 11l0 6"/><path d="M14 11l0 6"/><path d="M5 7l1 12a2 2 0 0 0 2 2h8a2 2 0 0 0 2 -2l1 -12"/><path d="M9 7v-3a1 1 0 0 1 1 -1h4a1 1 0 0 1 1 1v3"/></svg></div>
<div class="rowline" style="top:1068px"></div>
<div class="td" style="left:310px;top:1036px">1825</div>
<div class="td name" style="left:418px;top:1036px;letter-spacing:0.282px">Accum.depreciation-Furn. and Equip</div>
<div class="td" style="left:870px;top:1036px;letter-spacing:0.375px">Non-current Asset</div>
<div class="td" style="left:1117px;top:1036px;letter-spacing:0.281px">Opening Balances and adjustments</div>
<div class="td" style="left:1438px;top:1036px">-</div>
<div class="badge" style="top:1030px">Enabled</div>
<div class="act" style="left:1740px;top:1028px;background:#ffa21d"><svg width="16" height="16" viewBox="0 0 24 24" fill="none" stroke="#fff" stroke-width="1.8" stroke-linecap="round" stroke-linejoin="round" ><path d="M21 12h-2c-.894 0 -1.662 -.857 -1.761 -2c-.296 -3.45 -.749 -6 -2.749 -6s-2.5 3.582 -2.5 8s-.5 8 -2.5 8s-2.452 -2.547 -2.749 -6c-.1 -1.147 -.867 -2 -1.763 -2h-2"/></svg></div>
<div class="act" style="left:1781px;top:1028px;background:#3ec9d6"><svg width="16" height="16" viewBox="0 0 24 24" fill="none" stroke="#fff" stroke-width="1.8" stroke-linecap="round" stroke-linejoin="round" ><path d="M4 20h4l10.5 -10.5a2.828 2.828 0 1 0 -4 -4l-10.5 10.5v4"/><path d="M13.5 6.5l4 4"/></svg></div>
<div class="act" style="left:1821px;top:1028px;background:#ff3a6e"><svg width="16" height="16" viewBox="0 0 24 24" fill="none" stroke="#fff" stroke-width="1.8" stroke-linecap="round" stroke-linejoin="round" ><path d="M4 7l16 0"/><path d="M10 11l0 6"/><path d="M14 11l0 6"/><path d="M5 7l1 12a2 2 0 0 0 2 2h8a2 2 0 0 0 2 -2l1 -12"/><path d="M9 7v-3a1 1 0 0 1 1 -1h4a1 1 0 0 1 1 1v3"/></svg></div>
<div class="rowline" style="top:1120px"></div>
<div class="td" style="left:310px;top:1088px">1830</div>
<div class="td name" style="left:418px;top:1088px;letter-spacing:0.3px">Vehicles</div>
<div class="td" style="left:870px;top:1088px;letter-spacing:0.375px">Non-current Asset</div>
<div class="td" style="left:1117px;top:1088px;letter-spacing:0.281px">Opening Balances and adjustments</div>
<div class="td" style="left:1438px;top:1088px">-</div>
<div class="badge" style="top:1082px">Enabled</div>
<div class="act" style="left:1740px;top:1080px;background:#ffa21d"><svg width="16" height="16" viewBox="0 0 24 24" fill="none" stroke="#fff" stroke-width="1.8" stroke-linecap="round" stroke-linejoin="round" ><path d="M21 12h-2c-.894 0 -1.662 -.857 -1.761 -2c-.296 -3.45 -.749 -6 -2.749 -6s-2.5 3.582 -2.5 8s-.5 8 -2.5 8s-2.452 -2.547 -2.749 -6c-.1 -1.147 -.867 -2 -1.763 -2h-2"/></svg></div>
<div class="act" style="left:1781px;top:1080px;background:#3ec9d6"><svg width="16" height="16" viewBox="0 0 24 24" fill="none" stroke="#fff" stroke-width="1.8" stroke-linecap="round" stroke-linejoin="round" ><path d="M4 20h4l10.5 -10.5a2.828 2.828 0 1 0 -4 -4l-10.5 10.5v4"/><path d="M13.5 6.5l4 4"/></svg></div>
<div class="act" style="left:1821px;top:1080px;background:#ff3a6e"><svg width="16" height="16" viewBox="0 0 24 24" fill="none" stroke="#fff" stroke-width="1.8" stroke-linecap="round" stroke-linejoin="round" ><path d="M4 7l16 0"/><path d="M10 11l0 6"/><path d="M14 11l0 6"/><path d="M5 7l1 12a2 2 0 0 0 2 2h8a2 2 0 0 0 2 -2l1 -12"/><path d="M9 7v-3a1 1 0 0 1 1 -1h4a1 1 0 0 1 1 1v3"/></svg></div>
</body></html>
